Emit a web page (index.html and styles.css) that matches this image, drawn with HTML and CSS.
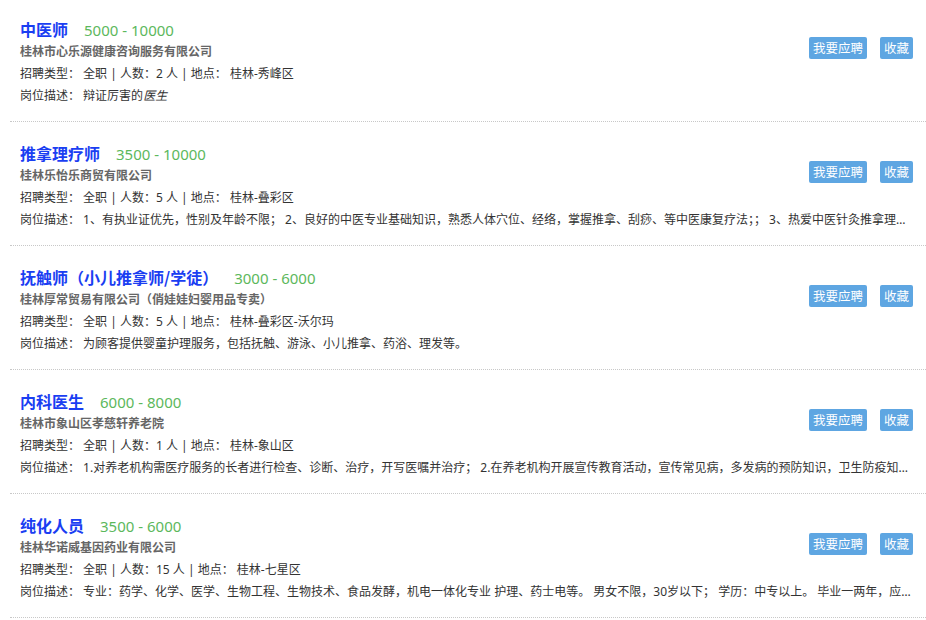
FILE: index.html
```html
<!DOCTYPE html>
<html lang="zh-CN">
<head>
    <meta charset="UTF-8">
    <title>招聘信息</title>
    <link rel="stylesheet" href="styles.css">
</head>
<body>
    <div class="job-list">
        <div class="job">
            <div class="job-ops">
                <button class="btn">我要应聘</button>
                <button class="btn">收藏</button>
            </div>
            <div class="job-title"><span class="name">中医师</span><span class="salary">5000 - 10000</span></div>
            <div class="company">桂林市心乐源健康咨询服务有限公司</div>
            <div class="info">招聘类型： 全职 | 人数：2 人 | 地点： 桂林-秀峰区</div>
            <div class="desc">岗位描述： 辩证厉害的<em>医生</em></div>
        </div>
        <div class="job">
            <div class="job-ops">
                <button class="btn">我要应聘</button>
                <button class="btn">收藏</button>
            </div>
            <div class="job-title"><span class="name">推拿理疗师</span><span class="salary">3500 - 10000</span></div>
            <div class="company">桂林乐怡乐商贸有限公司</div>
            <div class="info">招聘类型： 全职 | 人数：5 人 | 地点： 桂林-叠彩区</div>
            <div class="desc">岗位描述： 1、有执业证优先，性别及年龄不限； 2、良好的中医专业基础知识，熟悉人体穴位、经络，掌握推拿、刮痧、等中医康复疗法；； 3、热爱中医针灸推拿理疗行业</div>
        </div>
        <div class="job">
            <div class="job-ops">
                <button class="btn">我要应聘</button>
                <button class="btn">收藏</button>
            </div>
            <div class="job-title"><span class="name">抚触师（小儿推拿师/学徒）</span><span class="salary">3000 - 6000</span></div>
            <div class="company">桂林厚常贸易有限公司（俏娃娃妇婴用品专卖）</div>
            <div class="info">招聘类型： 全职 | 人数：5 人 | 地点： 桂林-叠彩区-沃尔玛</div>
            <div class="desc">岗位描述： 为顾客提供婴童护理服务，包括抚触、游泳、小儿推拿、药浴、理发等。</div>
        </div>
        <div class="job">
            <div class="job-ops">
                <button class="btn">我要应聘</button>
                <button class="btn">收藏</button>
            </div>
            <div class="job-title"><span class="name">内科医生</span><span class="salary">6000 - 8000</span></div>
            <div class="company">桂林市象山区孝慈轩养老院</div>
            <div class="info">招聘类型： 全职 | 人数：1 人 | 地点： 桂林-象山区</div>
            <div class="desc">岗位描述： 1.对养老机构需医疗服务的长者进行检查、诊断、治疗，开写医嘱并治疗； 2.在养老机构开展宣传教育活动，宣传常见病，多发病的预防知识，卫生防疫知识等</div>
        </div>
        <div class="job">
            <div class="job-ops">
                <button class="btn">我要应聘</button>
                <button class="btn">收藏</button>
            </div>
            <div class="job-title"><span class="name">纯化人员</span><span class="salary">3500 - 6000</span></div>
            <div class="company">桂林华诺威基因药业有限公司</div>
            <div class="info">招聘类型： 全职 | 人数：15 人 | 地点： 桂林-七星区</div>
            <div class="desc">岗位描述： 专业：药学、化学、医学、生物工程、生物技术、食品发酵，机电一体化专业 护理、药士电等。 男女不限，30岁以下； 学历：中专以上。 毕业一两年，应届</div>
        </div>
    </div>
</body>
</html>
```

FILE: styles.css
```css
body {
    margin: 0;
    font-family: "Noto Sans", "Noto Sans CJK SC", sans-serif;
    font-size: 12px;
    color: #333;
    background-color: #fff;
}
.job-list {
    margin: -2px 0 0 10px;
}
.job {
    padding: 20px 13px 14px 10px;
    border-bottom: 1px dotted #c8c8c8;
}
.job-ops {
    float: right;
    margin-top: 19px;
    display: flex;
    gap: 13px;
}
.btn {
    height: 22px;
    padding: 0 4px;
    border: none;
    border-radius: 2px;
    background-color: #5ea6e2;
    color: #fff;
    font-family: "Noto Sans CJK SC", sans-serif;
    font-size: 12.5px;
    line-height: 22px;
    cursor: pointer;
}
.job-title {
    height: 23px;
    line-height: 23px;
}
.job-title .name {
    color: #1a3ef2;
    font-size: 16px;
    font-weight: bold;
    font-family: "Noto Sans CJK SC", sans-serif;
}
.job-title .salary {
    margin-left: 16px;
    color: #5cb85c;
    font-size: 15px;
}
.company {
    line-height: 22px;
    color: #666;
    font-weight: bold;
}
.info,
.desc {
    line-height: 22px;
}
.desc {
    overflow: hidden;
    white-space: nowrap;
    text-overflow: ellipsis;
}
```
